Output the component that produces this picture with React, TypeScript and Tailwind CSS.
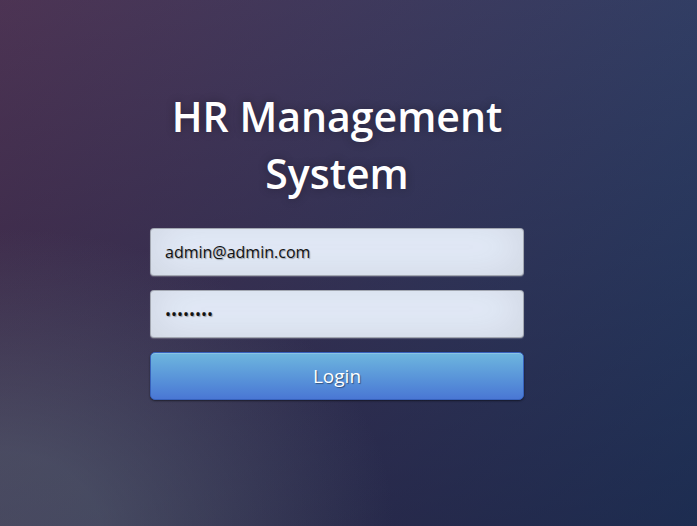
import { useState } from 'react'

export default function App() {
  const [email, setEmail] = useState('admin@admin.com')
  const [password, setPassword] = useState('12345678')

  return (
    <div className="min-h-screen w-full bg-[#14224c] bg-[radial-gradient(ellipse_farthest-corner_at_0%_100%,rgba(104,128,138,0.4)_10%,rgba(138,114,76,0)_40%),linear-gradient(to_bottom,rgba(57,173,219,0.25)_0%,rgba(42,60,87,0.4)_100%),linear-gradient(135deg,#530b26_0%,#14224c_100%)] font-['Open_Sans',sans-serif]">
      <div className="flex flex-col items-center pt-[88px] pr-[23px]">
        {/* Title */}
        <h1 className="w-[374px] text-center text-[41px] leading-[57px] font-semibold text-white [text-shadow:0_0_10px_rgba(0,0,0,0.3)]">
          HR Management System
        </h1>

        {/* Form */}
        <form className="mt-[26px] flex w-[374px] flex-col gap-[14px]" onSubmit={e => e.preventDefault()}>
          <input
            type="email"
            value={email}
            onChange={e => setEmail(e.target.value)}
            className="h-[48px] w-full rounded-[4px] border border-black/30 bg-[#e8f0fe] px-[14px] text-[16px] text-[#111] shadow-[inset_0_-5px_45px_rgba(100,100,100,0.2),0_1px_1px_rgba(255,255,255,0.2)] outline-none [text-shadow:1px_1px_1px_rgba(0,0,0,0.3)]"
          />
          <input
            type="password"
            value={password}
            onChange={e => setPassword(e.target.value)}
            className="h-[48px] w-full rounded-[4px] border border-black/30 bg-[#e8f0fe] px-[14px] text-[16px] text-[#111] shadow-[inset_0_-5px_45px_rgba(100,100,100,0.2),0_1px_1px_rgba(255,255,255,0.2)] outline-none [text-shadow:1px_1px_1px_rgba(0,0,0,0.3)]"
          />
          <button
            type="submit"
            className="h-[48px] w-full rounded-[5px] border border-[#3762bc] bg-[#4a77d4] bg-gradient-to-b from-[#6eb6de] to-[#4a77d4] text-[19px] text-white shadow-[inset_0_1px_0_rgba(255,255,255,0.2),0_1px_2px_rgba(0,0,0,0.5)] [text-shadow:1px_1px_1px_rgba(0,0,0,0.4)]"
          >
            Login
          </button>
        </form>
      </div>
    </div>
  )
}
